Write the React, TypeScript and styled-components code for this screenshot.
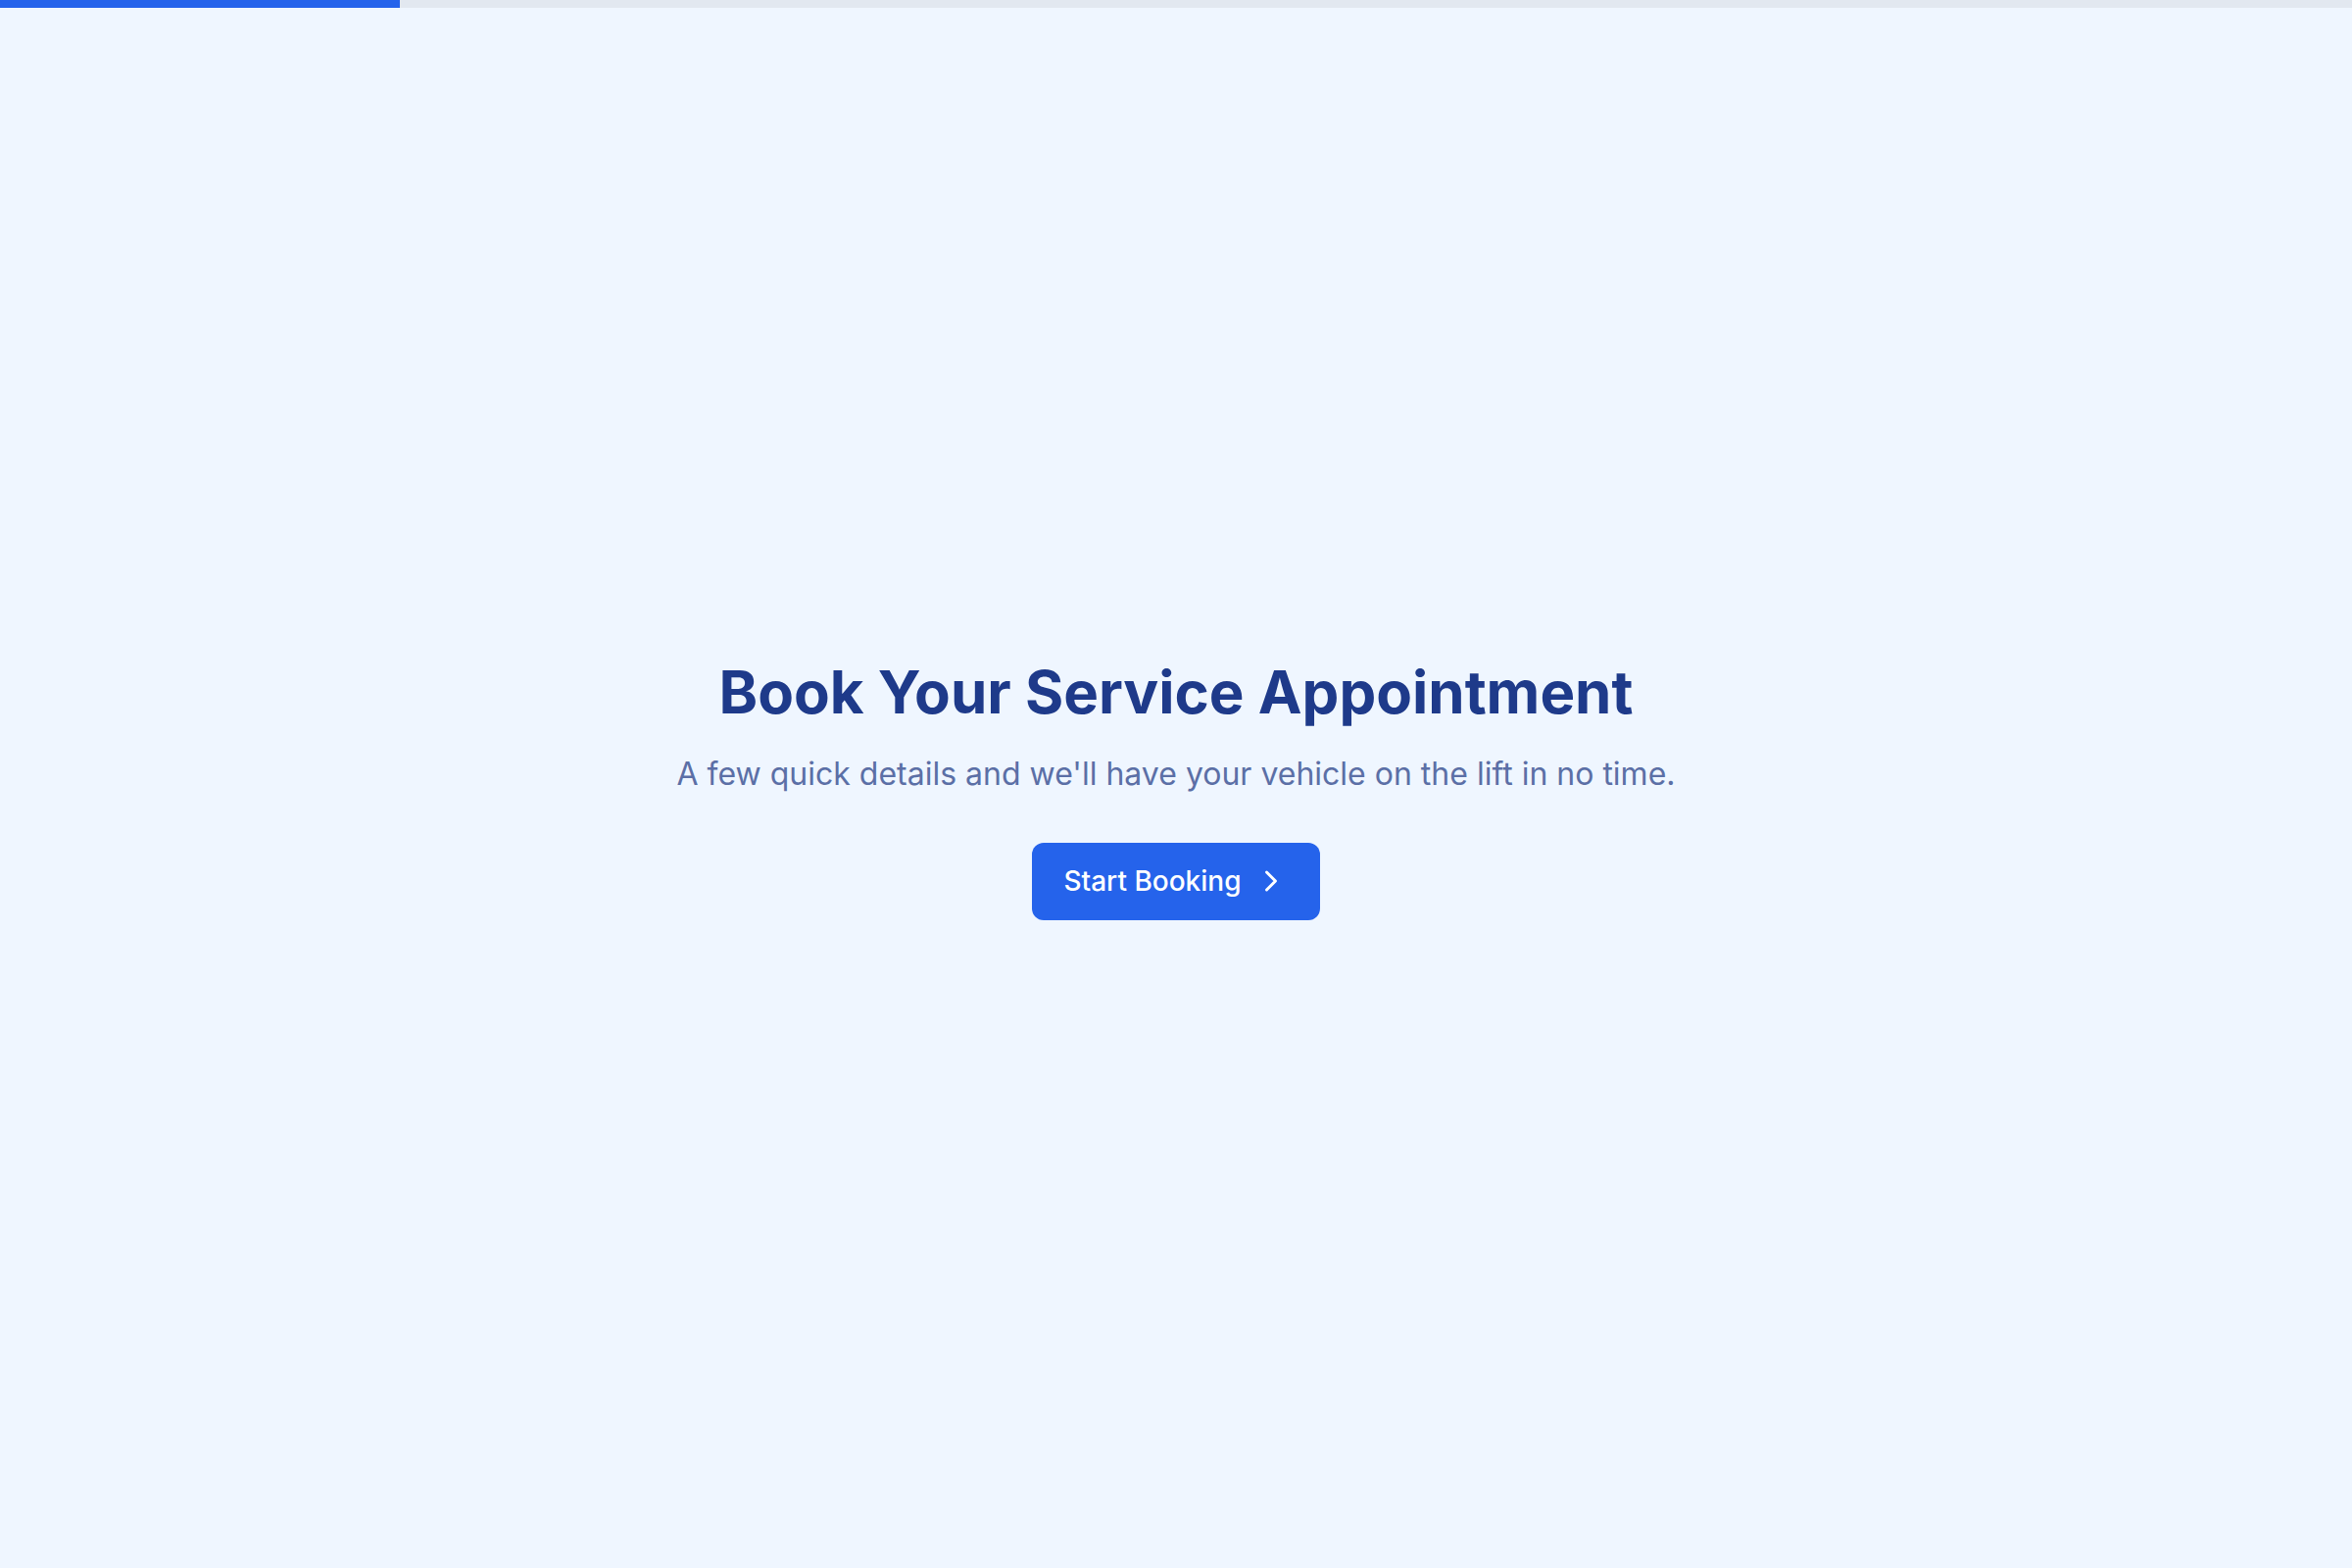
import styled, { createGlobalStyle } from 'styled-components';

const GlobalStyle = createGlobalStyle`
  html, body {
    margin: 0;
    padding: 0;
    background-color: #eff6ff;
    font-family: Inter, 'Noto Sans', sans-serif;
  }
  #root {
    min-height: 100vh;
  }
`;

const Page = styled.div`
  min-height: 100vh;
  display: flex;
  flex-direction: column;
  background-color: #eff6ff;
`;

const Track = styled.div`
  height: 8px;
  width: 100%;
  background-color: #e2e8f0;
  flex-shrink: 0;
`;

const Fill = styled.div<{ $value: number }>`
  height: 100%;
  width: ${(p) => p.$value}%;
  background-color: #2563eb;
`;

const Main = styled.main`
  flex: 1;
  display: flex;
  align-items: center;
  justify-content: center;
`;

const Intro = styled.section`
  display: flex;
  flex-direction: column;
  align-items: center;
  text-align: center;
`;

const Title = styled.h1`
  margin: 0;
  font-size: 60px;
  line-height: 72px;
  font-weight: 700;
  color: #1e3a8a;
`;

const Subtitle = styled.p`
  margin: 24px 0 0;
  font-size: 32px;
  line-height: 48px;
  color: #5b6fa6;
`;

const StartButton = styled.button`
  margin-top: 46px;
  height: 79px;
  padding: 0 32px;
  display: flex;
  align-items: center;
  gap: 12px;
  border: none;
  border-radius: 12px;
  background-color: #2563eb;
  color: #ffffff;
  font-family: Inter, 'Noto Sans', sans-serif;
  font-size: 28px;
  font-weight: 500;
  cursor: pointer;

  svg {
    width: 36px;
    height: 36px;
  }

  &:hover {
    background-color: #1d4ed8;
  }
`;

const App: React.FC = () => {
  return (
    <Page>
      <GlobalStyle />
      <Track>
        <Fill $value={17} />
      </Track>
      <Main>
        <Intro>
          <Title>Book Your Service Appointment</Title>
          <Subtitle>A few quick details and we'll have your vehicle on the lift in no time.</Subtitle>
          <StartButton>
            Start Booking
            <svg
              xmlns='http://www.w3.org/2000/svg'
              viewBox='0 0 24 24'
              fill='none'
              stroke='currentColor'
              strokeWidth={2}
              strokeLinecap='round'
              strokeLinejoin='round'>
              <path d='m9 18 6-6-6-6' />
            </svg>
          </StartButton>
        </Intro>
      </Main>
    </Page>
  );
};

export default App;
